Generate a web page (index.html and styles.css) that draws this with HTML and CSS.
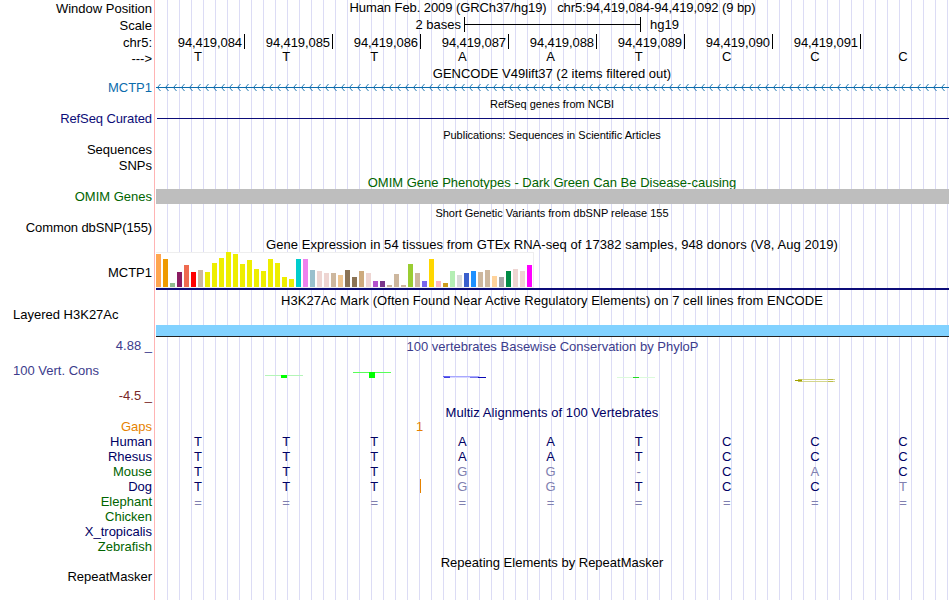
FILE: index.html
```html
<!DOCTYPE html>
<html lang="en">
<head>
  <meta charset="UTF-8" />
  <meta name="viewport" content="width=device-width, initial-scale=1" />
  <title>Human chr5:94,419,084-94,419,092 - Genome Browser</title>
  <link rel="stylesheet" href="styles.css">
</head>
<body>
  <main class="browser">
    <!-- Position and ruler -->
    <div class="row position">
      <div class="label">Window Position</div>
      <div class="track title">Human Feb. 2009 (GRCh37/hg19) &nbsp; chr5:94,419,084-94,419,092 (9 bp)</div>
    </div>
    <div class="row scale">
      <div class="label">Scale</div>
      <div class="track">
        <span class="scale-size">2 bases</span>
        <span class="scale-bar"></span>
        <span class="scale-db">hg19</span>
      </div>
    </div>
    <div class="row ruler">
      <div class="label">chr5:</div>
      <div class="track ticks">
        <span>94,419,084</span><span>94,419,085</span><span>94,419,086</span><span>94,419,087</span><span>94,419,088</span><span>94,419,089</span><span>94,419,090</span><span>94,419,091</span>
      </div>
    </div>
    <div class="row strand">
      <div class="label">---&gt;</div>
      <div class="track bases"><span>T</span><span>T</span><span>T</span><span>A</span><span>A</span><span>T</span><span>C</span><span>C</span><span>C</span></div>
    </div>

    <!-- Genes -->
    <h2 class="title">GENCODE V49lift37 (2 items filtered out)</h2>
    <div class="row gencode">
      <div class="label">MCTP1</div>
      <svg class="track" width="793" height="16">
        <defs>
          <pattern id="arrows" x="1" width="8" height="16" patternUnits="userSpaceOnUse">
            <path d="M3.5 4 L0.5 7.5 L3.5 11" fill="none" stroke="#0c6cac" stroke-width="0.9" />
          </pattern>
        </defs>
        <rect x="1" width="788" height="16" fill="url(#arrows)" />
        <rect y="7" width="793" height="1" fill="#0c6cac" />
      </svg>
    </div>
    <h2 class="title small">RefSeq genes from NCBI</h2>
    <div class="row refseq">
      <div class="label tight">RefSeq Curated</div>
      <div class="track"><div class="gene-line"></div></div>
    </div>

    <!-- Literature and variants -->
    <h2 class="title small pubs">Publications: Sequences in Scientific Articles</h2>
    <div class="row item"><div class="label">Sequences</div></div>
    <div class="row item"><div class="label">SNPs</div></div>
    <h2 class="title green omim-title">OMIM Gene Phenotypes - Dark Green Can Be Disease-causing</h2>
    <div class="row">
      <div class="label green">OMIM Genes</div>
      <div class="track omim-bar"></div>
    </div>
    <h2 class="title small variants">Short Genetic Variants from dbSNP release 155</h2>
    <div class="row dbsnp"><div class="label tight">Common dbSNP(155)</div></div>

    <!-- Expression -->
    <h2 class="title wide">Gene Expression in 54 tissues from GTEx RNA-seq of 17382 samples, 948 donors (V8, Aug 2019)</h2>
    <div class="row gtex">
      <div class="label">MCTP1</div>
      <div class="track"><div class="bars" id="gtexBars"></div></div>
    </div>
    <h2 class="title wide h3k-title">H3K27Ac Mark (Often Found Near Active Regulatory Elements) on 7 cell lines from ENCODE</h2>
    <div class="row h3k">
      <div class="label left">Layered H3K27Ac</div>
      <div class="track h3k-bar"></div>
    </div>

    <!-- Conservation -->
    <div class="row phylop-head">
      <div class="label phylop">4.88 _</div>
      <div class="track title phylop">100 vertebrates Basewise Conservation by PhyloP</div>
    </div>
    <div class="row cons">
      <div class="cons-labels">
        <div class="label left phylop">100 Vert. Cons</div>
        <div class="label negative">-4.5 _</div>
      </div>
      <svg class="track" width="793" height="50" shape-rendering="crispEdges">
        <rect x="109" y="21" width="38" height="1" fill="#b4f5b8" />
        <rect x="125" y="21" width="6" height="3" fill="#00ff00" />
        <rect x="197" y="18" width="38" height="1" fill="#58ff58" />
        <rect x="213" y="18" width="6" height="6" fill="#00ff00" />
        <rect x="287" y="22" width="36" height="1" fill="#a8a8ff" />
        <rect x="287" y="22" width="7" height="1" fill="#6464f4" />
        <rect x="288" y="23" width="6" height="1" fill="#4040e0" />
        <rect x="294" y="23" width="20" height="1" fill="#d8d8ff" />
        <rect x="314" y="23" width="8" height="1" fill="#7878ec" />
        <rect x="322" y="23" width="8" height="1" fill="#0808b4" />
        <rect x="461" y="23" width="38" height="1" fill="#dcfadc" />
        <rect x="477" y="23" width="6" height="1" fill="#20dd20" />
        <rect x="643" y="25" width="36" height="1" fill="#d4d68c" />
        <rect x="643" y="27" width="36" height="1" fill="#d4d68c" />
        <rect x="639" y="26" width="7" height="1" fill="#a0a000" />
        <rect x="642" y="25" width="4" height="1" fill="#c4c450" />
        <rect x="642" y="27" width="4" height="1" fill="#c4c450" />
        <rect x="672" y="25" width="5" height="1" fill="#bcbc48" />
        <rect x="672" y="27" width="5" height="1" fill="#bcbc48" />
      </svg>
    </div>

    <!-- Multiple alignment -->
    <h2 class="title navy wide multiz-title">Multiz Alignments of 100 Vertebrates</h2>
    <div class="multiz">
      <div class="row gaps">
        <div class="label">Gaps</div>
        <div class="track"><span>1</span></div>
      </div>
      <div class="row">
        <div class="label navy">Human</div>
        <div class="track bases navy"><span>T</span><span>T</span><span>T</span><span>A</span><span>A</span><span>T</span><span>C</span><span>C</span><span>C</span></div>
      </div>
      <div class="row">
        <div class="label navy">Rhesus</div>
        <div class="track bases navy"><span>T</span><span>T</span><span>T</span><span>A</span><span>A</span><span>T</span><span>C</span><span>C</span><span>C</span></div>
      </div>
      <div class="row">
        <div class="label green">Mouse</div>
        <div class="track bases navy"><span>T</span><span>T</span><span>T</span><span class="diff">G</span><span class="diff">G</span><span class="diff">-</span><span>C</span><span class="diff">A</span><span>C</span></div>
      </div>
      <div class="row">
        <div class="label navy">Dog</div>
        <div class="track bases navy"><span>T</span><span>T</span><span class="insert">T</span><span class="diff">G</span><span class="diff">G</span><span>T</span><span>C</span><span>C</span><span class="diff">T</span></div>
      </div>
      <div class="row unaligned">
        <div class="label green">Elephant</div>
        <div class="track bases diff"><span>=</span><span>=</span><span>=</span><span>=</span><span>=</span><span>=</span><span>=</span><span>=</span><span>=</span></div>
      </div>
      <div class="row"><div class="label green">Chicken</div></div>
      <div class="row"><div class="label navy">X_tropicalis</div></div>
      <div class="row"><div class="label green">Zebrafish</div></div>
    </div>

    <!-- Repeats -->
    <h2 class="title">Repeating Elements by RepeatMasker</h2>
    <div class="row repeats"><div class="label">RepeatMasker</div></div>
  </main>
  <script src="script.js"></script>
</body>
</html>
```
FILE: styles.css
```css
:root {
  --navy: #000064;
  --green: #006400;
  --phylop: #3c3c8c;
  --grid: #dcdcf5;
  --divider: #ffb4b4;
  --diff: #8080b0;
}
* {
  margin: 0; padding: 0; box-sizing: border-box;
}
body {
  font-family: "Liberation Sans", Arial, Helvetica, sans-serif;
  font-size: 13px;
  line-height: 15px;
  color: #000;
  background-color: #fff;
}
.browser {
  width: 949px;
  height: 600px;
  overflow: hidden;
  background:
    linear-gradient(var(--divider), var(--divider)) 154px 0 / 1px 100% no-repeat,
    repeating-linear-gradient(to right, transparent 0 11px, var(--grid) 11px 12px) 156px 0 no-repeat;
}

/* rows */
.row {
  display: flex;
  min-height: 15px;
}
.label {
  width: 152px;
  flex: none;
  text-align: right;
  white-space: nowrap;
}
.label.left {
  text-align: left;
  padding-left: 13px;
}
.label.tight {
  letter-spacing: -0.1px;
}
.track {
  width: 793px;
  flex: none;
  margin-left: 4px;
}
.title {
  font-size: 13px;
  font-weight: normal;
  text-align: center;
  white-space: nowrap;
}
h2.title {
  width: 792px;
  height: 15px;
  margin-left: 156px;
}
h2.small {
  font-size: 11px;
  padding-top: 1px;
}
h2.wide {
  letter-spacing: 0.05px;
}
.green { color: var(--green); }
.navy { color: var(--navy); }
.phylop { color: var(--phylop); }
.negative { color: #782828; }

/* ruler */
.position {
  height: 17px;
}
.position .title {
  letter-spacing: -0.08px;
}
.position .label,
.scale .label {
  padding-top: 1px;
}
.scale {
  height: 17px;
}
.scale .track {
  display: flex;
}
.scale-size {
  width: 305px;
  text-align: right;
}
.scale-bar {
  width: 177px;
  height: 15px;
  margin: 0 9px 0 3px;
  border: solid #000;
  border-width: 0 1px;
  background: linear-gradient(#000, #000) 0 7px / 100% 1px no-repeat;
}
.ruler {
  height: 15px;
}
.ruler .label {
  padding-top: 1px;
}
.ticks {
  display: grid;
  grid-template-columns: repeat(9, 88px);
  margin-left: 5px;
  letter-spacing: -0.08px;
}
.ticks span {
  height: 15px;
  padding: 1px 2px 0 0;
  text-align: right;
  border-right: 1px solid #000;
}
.strand {
  height: 17px;
}
.strand .label {
  padding-top: 2px;
}
.bases {
  display: grid;
  grid-template-columns: repeat(9, 1fr);
}
.bases span {
  padding-right: 4px;
  text-align: center;
}
.diff { color: var(--diff); }

/* gene tracks */
h2 + .gencode {
  height: 16px;
  margin-top: -1px;
  color: #0c6cac;
}
.refseq {
  height: 16px;
  color: #0c0c78;
}
.gene-line {
  height: 1px;
  margin: 7px 0 0 1px;
  background-color: #0c0c78;
}
.item {
  height: 16px;
}
h2.omim-title {
  padding-top: 1px;
}
.omim-bar {
  height: 15px;
  background-color: #bebebe;
}
h2.variants {
  height: 16px;
  padding-top: 2px;
}
.dbsnp {
  height: 17px;
}

/* GTEx */
.gtex {
  height: 38px;
}
.gtex .label {
  padding-top: 13px;
}
.gtex .track {
  border-bottom: 2px solid #0c0c78;
}
.bars {
  display: flex;
  align-items: flex-end;
  gap: 2px;
  width: 378px;
  height: 36px;
  background-color: #fff;
  border: solid #eee;
  border-width: 1px 1px 1px 0;
}
.bars span {
  width: 5px;
  flex: none;
}

/* H3K27Ac */
h2.h3k-title {
  height: 17px;
  padding-top: 3px;
}
.h3k {
  height: 30px;
}
.h3k-bar {
  align-self: flex-end;
  height: 12px;
  background-color: #82d2ff;
  border-bottom: 1px solid #222;
}

/* conservation */
.phylop-head {
  height: 17px;
}
.phylop-head .label {
  padding-top: 1px;
}
.phylop-head .title {
  padding-top: 2px;
}
.cons {
  height: 50px;
}
.cons-labels {
  display: flex;
  flex-direction: column;
  gap: 10px;
  padding-top: 9px;
}
h2.multiz-title {
  padding-top: 1px;
}
.gaps {
  color: #e68200;
}
.gaps span {
  display: block;
  width: 527px;
  text-align: center;
}
.bases .insert {
  height: 14px;
  margin-right: -1px;
  border-right: 1px solid #e68200;
}
.unaligned {
  height: 15px;
}
.unaligned .bases {
  padding-top: 1px;
}
.multiz {
  height: 136px;
}
.repeats {
  margin-top: -1px;
}
```
FILE: script.js
```js
// GTEx tissues: [bar height, tissue color]
const tissues = [
  [33, '#ffa54f'], [28, '#ee9a00'], [4, '#8fbc8f'], [15, '#8b1c62'], [22, '#ee6a50'], [15, '#ff0000'], [17, '#cdb79e'],
  [15, '#eeee00'], [24, '#eeee00'], [29, '#eeee00'], [35, '#eeee00'], [33, '#eeee00'], [23, '#eeee00'], [27, '#eeee00'],
  [18, '#eeee00'], [16, '#eeee00'], [28, '#eeee00'], [24, '#eeee00'], [10, '#eeee00'], [8, '#eeee00'],
  [28, '#00cdcd'], [28, '#ee82ee'], [17, '#9ac0cd'], [16, '#eed5d2'], [14, '#eed5d2'], [14, '#cdb79e'], [12, '#eec591'],
  [17, '#8b7355'], [10, '#8b7355'], [16, '#cdaa7d'], [14, '#eed5d2'], [6, '#b452cd'], [6, '#7a378b'],
  [2, '#cdb79e'], [13, '#cdb79e'], [2, '#cdb79e'], [23, '#9acd32'], [14, '#cdb79e'], [6, '#7a67ee'], [28, '#ffd700'],
  [6, '#ffb6c1'], [4, '#cd9b1d'], [16, '#b4eeb4'], [12, '#d9d9d9'], [14, '#3a5fcd'], [16, '#1e90ff'],
  [15, '#cdb79e'], [17, '#cdb79e'], [11, '#ffd39b'], [10, '#a6a6a6'], [16, '#008b45'],
  [18, '#eed5d2'], [16, '#eed5d2'], [22, '#ff00ff']
];

const bars = document.getElementById('gtexBars');
tissues.forEach(([height, color]) => {
  const bar = document.createElement('span');
  bar.style.height = height + 'px';
  bar.style.background = color;
  bars.appendChild(bar);
});
```
